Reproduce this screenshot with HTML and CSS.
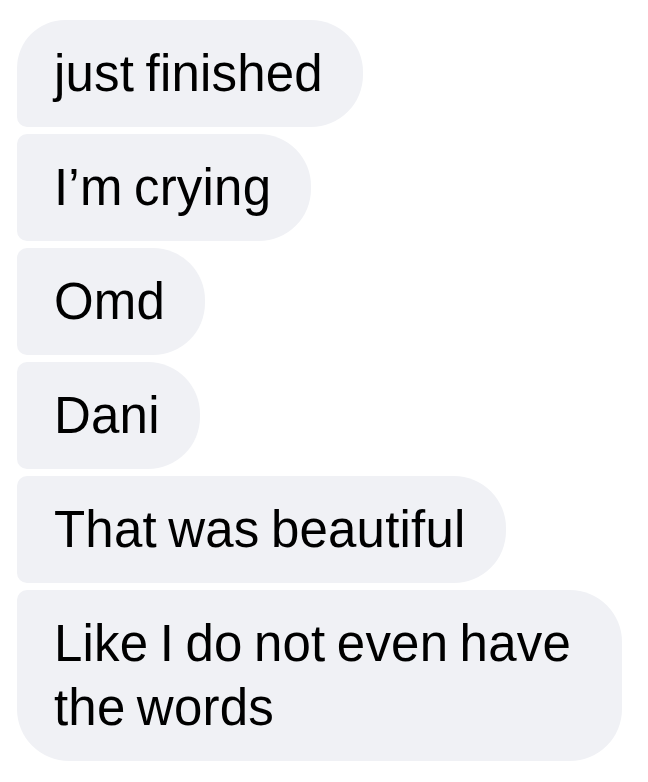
FILE: index.html
```html
<!DOCTYPE html>
<html>
<head>
<meta charset="utf-8">
<link rel="stylesheet" href="styles.css">
</head>
<body>
<div class="thread">
  <div class="bubble first">just finished</div>
  <div class="bubble">I’m crying</div>
  <div class="bubble">Omd</div>
  <div class="bubble">Dani</div>
  <div class="bubble">That was beautiful</div>
  <div class="bubble last">Like I do not even have the words</div>
</div>
</body>
</html>
```
FILE: styles.css
```css
html, body {
  margin: 0;
  padding: 0;
  background: #ffffff;
}
.thread {
  display: flex;
  flex-direction: column;
  align-items: flex-start;
  gap: 7px;
  padding: 20px 0 0 17px;
}
.bubble {
  box-sizing: border-box;
  max-width: 605px;
  background: #f0f1f5;
  color: #000000;
  font-family: "Liberation Sans", Arial, sans-serif;
  font-size: 51px;
  line-height: 64px;
  letter-spacing: 0.2px;
  word-spacing: -3px;
  padding: 21.5px 40px 21.5px 37px;
  border-radius: 10px 52px 52px 10px;
}
.bubble.first {
  border-top-left-radius: 48px;
}
.bubble.last {
  border-bottom-left-radius: 52px;
}
```
